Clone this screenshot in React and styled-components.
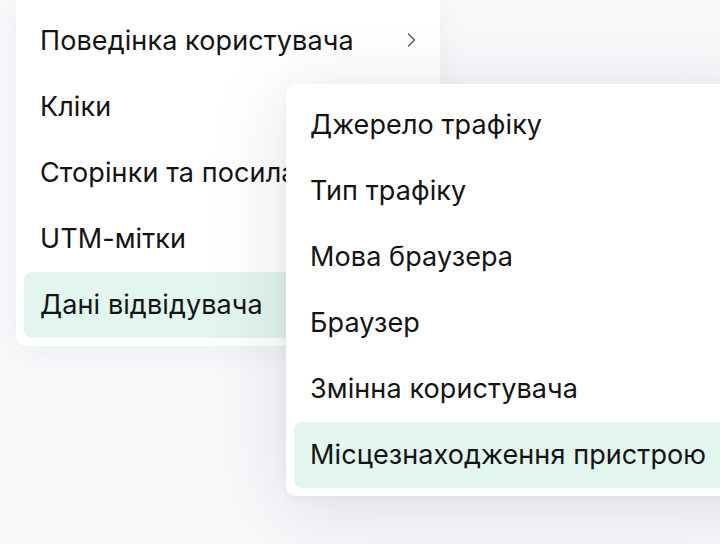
import React from 'react';
import styled, { createGlobalStyle } from 'styled-components';

const Global = createGlobalStyle`
    html, body
    {
        margin: 0;
        padding: 0;
        background: #f8f9fb;
        overflow: hidden;
    }
    body
    {
        font-family: Inter, "Noto Sans", sans-serif;
        -webkit-font-smoothing: antialiased;
    }
`;

const Page = styled.div`
    width: 720px;
    height: 544px;
    position: relative;
    overflow: hidden;
    padding: 0 16px;
    box-sizing: border-box;
`;

const Menu = styled.div`
    position: relative;
    width: 424px;
    margin-top: -8px;
    padding: 16px 8px 8px;
    box-sizing: border-box;
    background: #fff;
    border-radius: 10px;
    box-shadow: 0 6px 30px rgba(20, 30, 50, 0.05);
`;

const Row = styled.div`
    display: flex;
    align-items: center;
    justify-content: space-between;
    height: 66px;
    padding: 0 16px 2px;
    box-sizing: border-box;
    border-radius: 8px;
    font-size: 27px;
    letter-spacing: 0.1px;
    color: #141414;
    white-space: nowrap;
    background: ${p => (p.active ? '#e2f5ee' : 'transparent')};
`;

const Chevron = styled.svg`
    width: 10px;
    height: 14px;
    flex-shrink: 0;
`;

const SubMenu = styled.div`
    position: absolute;
    left: 270px;
    top: 92px;
    width: 470px;
    padding: 8px;
    background: #fff;
    border-radius: 10px;
    box-shadow: 0 12px 80px rgba(20, 30, 50, 0.13), 0 2px 12px rgba(20, 30, 50, 0.04);
`;

const mainItems = [
    { label: 'Поведінка користувача', arrow: true },
    { label: 'Кліки' },
    { label: 'Сторінки та посилання' },
    { label: 'UTM-мітки' },
    { label: 'Дані відвідувача', active: true },
];

const subItems = [
    { label: 'Джерело трафіку' },
    { label: 'Тип трафіку' },
    { label: 'Мова браузера' },
    { label: 'Браузер' },
    { label: 'Змінна користувача' },
    { label: 'Місцезнаходження пристрою', active: true },
];

const App = () =>
{
    return (
        <Page>
            <Global />
            <Menu>
                {mainItems.map(item => (
                    <Row key={item.label} active={item.active}>
                        <span>{item.label}</span>
                        {item.arrow && (
                            <Chevron viewBox="0 0 10 14" fill="none">
                                <path d="M2.5 1l6 6-6 6" stroke="#555" strokeWidth="1.3" strokeLinecap="round" strokeLinejoin="round" />
                            </Chevron>
                        )}
                    </Row>
                ))}
                <SubMenu>
                    {subItems.map(item => (
                        <Row key={item.label} active={item.active}>
                            <span>{item.label}</span>
                        </Row>
                    ))}
                </SubMenu>
            </Menu>
        </Page>
    );
};

export default App;
